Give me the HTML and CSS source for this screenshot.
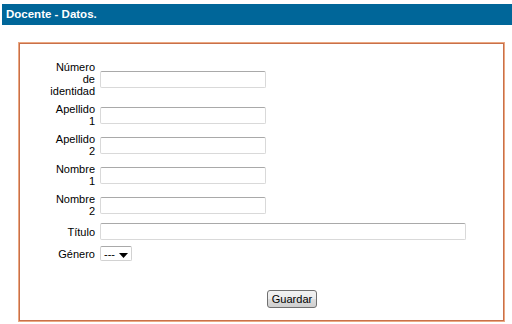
FILE: index.html
```html
<!DOCTYPE html>
<html lang="es">
  <head>
    <meta charset="UTF-8" />
    <title>Docente - Datos.</title>
    <link rel="stylesheet" href="styles.css">
  </head>
  <body>
    <div class="title-bar">Docente - Datos.</div>

    <!-- Datos del docente -->
    <div class="data-box">
      <form class="data-form">
        <label class="field-label"><span>Número de identidad</span></label>
        <input type="text" class="field-input" />

        <label class="field-label"><span>Apellido 1</span></label>
        <input type="text" class="field-input" />

        <label class="field-label"><span>Apellido 2</span></label>
        <input type="text" class="field-input" />

        <label class="field-label"><span>Nombre 1</span></label>
        <input type="text" class="field-input" />

        <label class="field-label"><span>Nombre 2</span></label>
        <input type="text" class="field-input" />

        <label class="field-label"><span>Título</span></label>
        <input type="text" class="field-input field-wide" />

        <label class="field-label"><span>Género</span></label>
        <div class="fake-select">
          <span>---</span>
          <svg width="9" height="5" viewBox="0 0 9 5"><path d="M0 0h9L4.5 5z" fill="#000"/></svg>
        </div>
      </form>

      <div class="form-actions">
        <button type="button" class="save-button">Guardar</button>
      </div>
    </div>
  </body>
</html>
```

FILE: styles.css
```css
/* base */
* {
  margin: 0;
  padding: 0;
  box-sizing: border-box;
}
body {
  font-family: "Liberation Sans", Arial, sans-serif;
  font-size: 11px;
  color: #000000;
  background-color: #ffffff;
}

/* blue header */
.title-bar {
  margin: 4px 0 0 2px;
  height: 21px;
  line-height: 21px;
  padding-left: 4px;
  background-color: #006699;
  color: #ffffff;
  font-weight: bold;
  font-size: 11.5px;
}

/* orange framed box */
.data-box {
  margin: 17px 0 0 18px;
  width: 487px;
  height: 280px;
  border: 1px solid #eba882;
  box-shadow: inset 0 0 0 1px #c8704a;
  padding: 18px 2px 0 1px;
}

/* form grid */
.data-form {
  display: grid;
  grid-template-columns: 75px auto;
  column-gap: 5px;
  row-gap: 6px;
  align-items: center;
}
.field-label {
  text-align: right;
  line-height: 12px;
}
.field-label span {
  display: inline-block;
  width: min-content;
}
.field-input {
  width: 166px;
  height: 17px;
  border: 1px solid #d9d9d9;
  border-top-color: #a9a9a9;
  border-radius: 2px;
  font-family: inherit;
  font-size: 11px;
  background: #ffffff;
}
.field-wide {
  width: 366px;
}

.fake-select {
  display: flex;
  align-items: center;
  justify-content: space-between;
  width: 32px;
  height: 15px;
  padding: 0 3px 0 3px;
  border: 1px solid #d2d2d2;
  border-top-color: #a9a9a9;
  border-radius: 2px;
  font-size: 11px;
}
.fake-select svg {
  margin-top: 4px;
}

/* footer with button */
.form-actions {
  margin-top: 29px;
  padding-left: 247px;
}
.save-button {
  width: 50px;
  height: 18px;
  font-family: inherit;
  font-size: 11px;
  color: #000000;
  border: 1px solid #707070;
  border-radius: 3px;
  background: linear-gradient(#f2f2f2, #ebebeb 50%, #dddddd 51%, #cfcfcf);
}
```
